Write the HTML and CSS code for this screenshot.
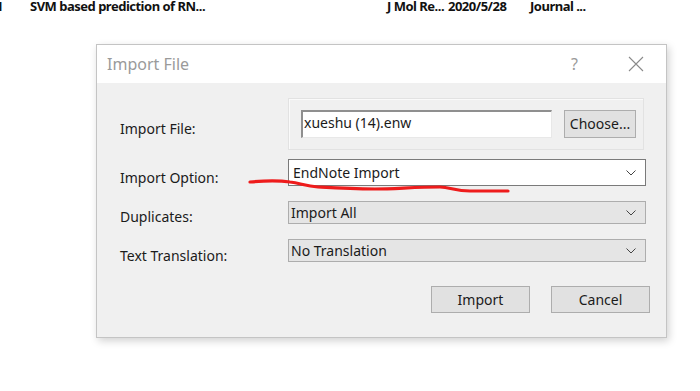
FILE: index.html
```html
<!DOCTYPE html>
<html>
<head>
<meta charset="utf-8">
<link rel="stylesheet" href="styles.css">
</head>
<body>
<div class="list-row">
  <span class="c-num">1</span>
  <span class="c-title">SVM based prediction of RN...</span>
  <span class="c-journal">J Mol Re...</span>
  <span class="c-date">2020/5/28</span>
  <span class="c-type">Journal ...</span>
</div>

<div class="dialog">
  <div class="titlebar">
    <span class="title">Import File</span>
    <span class="help">?</span>
    <svg class="close" width="16" height="16" viewBox="0 0 16 16"><path d="M1 1L15 15M15 1L1 15" stroke="#8a8a8a" stroke-width="1.1" fill="none"/></svg>
  </div>
  <div class="body">
    <div class="row row-file">
      <span class="label">Import File:</span>
      <div class="group">
        <div class="textbox">xueshu (14).enw</div>
        <div class="btn btn-choose">Choose...</div>
      </div>
    </div>
    <div class="row row-opt">
      <span class="label">Import Option:</span>
      <div class="select white"><span>EndNote Import</span><svg class="chev" width="10" height="6" viewBox="0 0 10 6"><path d="M0.5 0.5L5 5L9.5 0.5" stroke="#444" fill="none"/></svg></div>
    </div>
    <div class="row row-dup">
      <span class="label">Duplicates:</span>
      <div class="select"><span>Import All</span><svg class="chev" width="10" height="6" viewBox="0 0 10 6"><path d="M0.5 0.5L5 5L9.5 0.5" stroke="#444" fill="none"/></svg></div>
    </div>
    <div class="row row-tr">
      <span class="label">Text Translation:</span>
      <div class="select"><span>No Translation</span><svg class="chev" width="10" height="6" viewBox="0 0 10 6"><path d="M0.5 0.5L5 5L9.5 0.5" stroke="#444" fill="none"/></svg></div>
    </div>
    <div class="actions">
      <div class="btn btn-act">Import</div>
      <div class="btn btn-act">Cancel</div>
    </div>
  </div>
</div>

<svg class="scribble" width="700" height="391" viewBox="0 0 700 391">
  <path d="M250 182 C262 181 275 180 290 182 C300 183 305 186 318 187 C335 188 350 189 375 189 C395 189 415 187 440 187 C450 187 455 191 470 191 C485 191 495 191 508 191" stroke="#ee1c1c" stroke-width="3.2" stroke-linecap="round" fill="none"/>
</svg>
</body>
</html>
```

FILE: styles.css
```css
html, body {
  margin: 0;
  padding: 0;
  width: 700px;
  height: 391px;
  overflow: hidden;
  background: #ffffff;
  font-family: "Noto Sans", "Open Sans", sans-serif;
  color: #1b1b1b;
}

.list-row {
  display: flex;
  align-items: baseline;
  height: 14px;
  margin-top: -5px;
  font-weight: bold;
  font-size: 13px;
  letter-spacing: -0.5px;
  line-height: 22px;
  color: #111;
  white-space: nowrap;
}
.c-num { width: 34px; margin-left: -4px; flex: none; }
.c-title { width: 357px; flex: none; }
.c-journal { width: 61px; flex: none; }
.c-date { width: 82px; flex: none; }

.dialog {
  position: absolute;
  left: 96px;
  top: 44px;
  width: 569px;
  height: 292px;
  border: 1px solid #c4c4c4;
  background: #f0f0f0;
  box-shadow: 2px 3px 8px rgba(0,0,0,0.18);
  display: flex;
  flex-direction: column;
}

.titlebar {
  height: 38px;
  background: #ffffff;
  display: flex;
  align-items: center;
  padding-left: 10px;
  flex: none;
}
.title {
  font-size: 16px;
  color: #9a9a9a;
  flex: 1;
}
.help {
  font-size: 16px;
  color: #9a9a9a;
  margin-right: 50px;
}
.close { margin-right: 22px; }

.body {
  flex: 1;
  position: relative;
  padding: 14px 19px 0 23px;
}

.row {
  display: flex;
  align-items: center;
}
.label {
  width: 168px;
  font-size: 14px;
  flex: none;
}

.row-file { height: 53px; }
.row-file .label { padding-top: 10px; }

.group {
  width: 356px;
  height: 52px;
  border: 1px solid #e2e2e2;
  box-shadow: inset 1px 1px 0 #fafafa;
  display: flex;
  align-items: center;
  padding-left: 12px;
  box-sizing: border-box;
}
.textbox {
  width: 251px;
  height: 28px;
  box-sizing: border-box;
  background: #fff;
  border-top: 2px solid #8f8f8f;
  border-left: 2px solid #8f8f8f;
  border-right: 1px solid #e8e8e8;
  border-bottom: 1px solid #e8e8e8;
  font-size: 14px;
  line-height: 22px;
  padding-left: 1px;
  margin-right: 12px;
}
.btn {
  background: #e1e1e1;
  border: 1px solid #adadad;
  box-sizing: border-box;
  font-size: 14px;
  display: flex;
  align-items: center;
  justify-content: center;
}
.btn-choose {
  width: 72px;
  height: 28px;
}

.row-opt { margin-top: 9px; height: 27px; }
.row-dup { margin-top: 15px; height: 23px; }
.row-tr { margin-top: 15px; height: 23px; }
.row-opt .label { padding-top: 9px; }
.row-dup .label { padding-top: 8px; }
.row-tr .label { padding-top: 9px; }

.select {
  width: 358px;
  height: 100%;
  box-sizing: border-box;
  border: 1px solid #adadad;
  background: #e5e5e5;
  display: flex;
  align-items: center;
  justify-content: space-between;
  padding: 0 9px 0 2px;
  font-size: 14px;
}
.select.white {
  background: #ffffff;
  border-color: #7a7a7a;
  padding-left: 4px;
}
.chev { flex: none; }

.actions {
  display: flex;
  justify-content: flex-end;
  gap: 21px;
  margin-top: 24px;
  margin-right: -3px;
}
.btn-act {
  width: 99px;
  height: 27px;
}

.scribble {
  position: absolute;
  left: 0;
  top: 0;
  pointer-events: none;
}
```
